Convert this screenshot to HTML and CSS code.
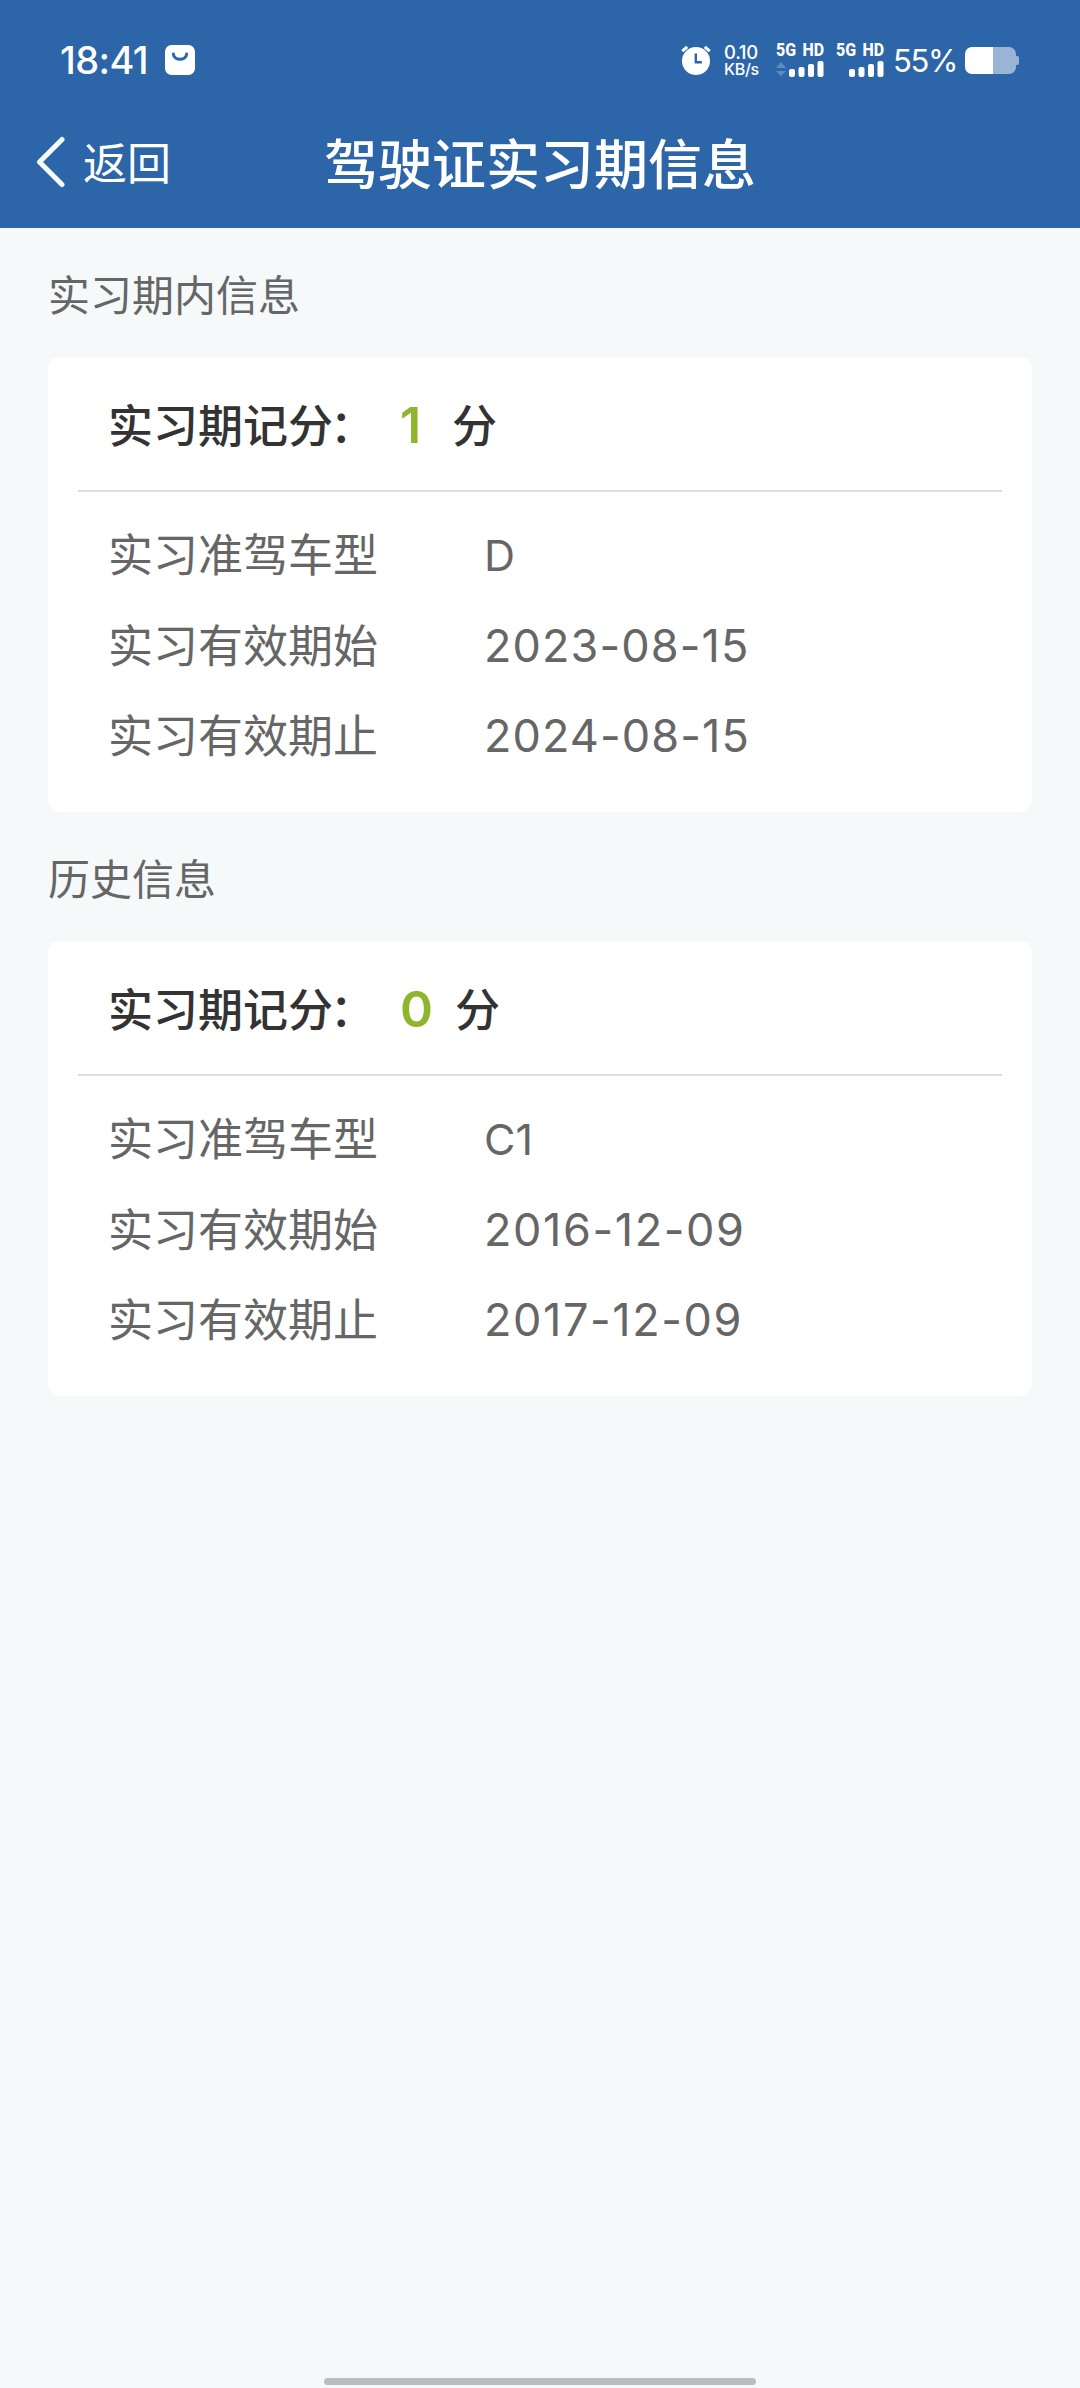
FILE: index.html
```html
<!DOCTYPE html>
<html lang="zh-CN">
<head>
  <meta charset="UTF-8">
  <title>驾驶证实习期信息</title>
  <link rel="stylesheet" href="styles.css">
</head>
<body>
  <header class="header">
    <div class="status-bar">
      <span class="time">18:41</span>
      <svg class="app-icon" width="30" height="30" viewBox="0 0 30 30">
        <rect width="30" height="30" rx="6.5" fill="#fff"/>
        <path d="M8.300 9c.8 7 12.600 7 13.400 0" fill="none" stroke="#2c65a8" stroke-width="3" stroke-linecap="round"/>
      </svg>
      <div class="status-right">
        <svg class="alarm" width="30" height="30" viewBox="0 0 30 30">
          <circle cx="15" cy="16" r="14" fill="#fff"/>
          <path d="M1.2 6.2l5-4.4M28.8 6.2l-5-4.4" stroke="#fff" stroke-width="3"/>
          <path d="M14.8 8.5v8.7h6" fill="none" stroke="#2c65a8" stroke-width="2.4"/>
        </svg>
        <div class="speed"><span class="speed-num">0.10</span><span class="speed-unit">KB/s</span></div>
        <div class="signal signal-1">
          <span>5G HD</span>
          <svg width="48" height="16" viewBox="0 0 48 16">
            <path d="M0 7l5-6 5 6zM0 10h10l-5 5z" fill="#5f8cc0"/>
            <g fill="#fff">
              <rect x="13" y="8" width="6" height="8" rx="2"/>
              <rect x="22.5" y="6" width="6" height="10" rx="2"/>
              <rect x="32" y="3" width="6" height="13" rx="2"/>
              <rect x="41.5" y="0" width="6" height="16" rx="2"/>
            </g>
          </svg>
        </div>
        <div class="signal signal-2">
          <span>5G HD</span>
          <svg width="48" height="16" viewBox="0 0 48 16">
            <g fill="#fff">
              <rect x="13" y="8" width="6" height="8" rx="2"/>
              <rect x="22.5" y="6" width="6" height="10" rx="2"/>
              <rect x="32" y="3" width="6" height="13" rx="2"/>
              <rect x="41.5" y="0" width="6" height="16" rx="2"/>
            </g>
          </svg>
        </div>
        <span class="percent">55%</span>
        <svg class="battery" width="54" height="27" viewBox="0 0 54 27">
          <path d="M28 0h16a7 7 0 0 1 7 7v2h1a2 2 0 0 1 2 2v5a2 2 0 0 1-2 2h-1v2a7 7 0 0 1-7 7H28z" fill="#9ab4d5"/>
          <path d="M28 0H7a7 7 0 0 0-7 7v13a7 7 0 0 0 7 7h21z" fill="#fff"/>
        </svg>
      </div>
    </div>
    <nav class="nav">
      <a class="back">
        <svg width="30" height="52" viewBox="0 0 30 52">
          <path d="M26 3.500L3.500 26 26 48.500" fill="none" stroke="#f5fcff" stroke-width="5" stroke-linecap="round" stroke-linejoin="round"/>
        </svg>
        <span>返回</span>
      </a>
      <h1>驾驶证实习期信息</h1>
    </nav>
  </header>

  <main class="content">
    <h2>实习期内信息</h2>
    <section class="card">
      <div class="score">
        <span class="score-label">实习期记分<span class="colon">：</span></span>
        <span class="score-num">1</span>
        <span>分</span>
      </div>
      <dl class="info">
        <dt>实习准驾车型</dt><dd class="type">D</dd>
        <dt>实习有效期始</dt><dd>2023-08-15</dd>
        <dt>实习有效期止</dt><dd>2024-08-15</dd>
      </dl>
    </section>

    <h2>历史信息</h2>
    <section class="card history">
      <div class="score">
        <span class="score-label">实习期记分<span class="colon">：</span></span>
        <span class="score-num">0</span>
        <span>分</span>
      </div>
      <dl class="info">
        <dt>实习准驾车型</dt><dd class="type">C1</dd>
        <dt>实习有效期始</dt><dd>2016-12-09</dd>
        <dt>实习有效期止</dt><dd>2017-12-09</dd>
      </dl>
    </section>
  </main>

  <footer class="home-bar"></footer>
</body>
</html>
```

FILE: styles.css
```css
* {
  box-sizing: border-box;
}
body {
  display: flex;
  flex-direction: column;
  height: 2388px;
  margin: 0;
  background: #f5f9fa;
  color: #666;
  font-family: "Noto Sans CJK SC", sans-serif;
  font-size: 45px;
}
svg {
  display: block;
  flex: none;
}
h1, h2, dl, dd {
  margin: 0;
  font-weight: normal;
}

/* Header */
.header {
  height: 228px;
  background: #2c65a8;
  color: #fff;
}
.status-bar {
  display: flex;
  align-items: center;
  height: 96px;
  padding: 23px 61px 0 60px;
  font-family: Inter, sans-serif;
}
.time {
  width: 105px;
  font-size: 38px;
  font-weight: 500;
  letter-spacing: -0.6px;
}
.status-right {
  display: flex;
  align-items: center;
  margin-left: auto;
}
.speed {
  display: flex;
  flex-direction: column;
  width: 38px;
  margin-left: 13px;
  font-weight: 500;
}
.speed-num {
  font-size: 18.5px;
  line-height: 18px;
  letter-spacing: -0.3px;
}
.speed-unit {
  font-size: 16px;
  line-height: 16px;
  letter-spacing: -0.3px;
}
.signal {
  width: 48px;
}
.signal span {
  display: block;
  width: 56px;
  height: 18px;
  font-family: Roboto, sans-serif;
  font-size: 19px;
  font-weight: 800;
  line-height: 13px;
  word-spacing: 3px;
  white-space: nowrap;
  transform: scaleX(0.84);
  transform-origin: left;
}
.signal-1 {
  margin-left: 14px;
}
.signal-2 {
  margin-left: 12px;
}
.percent {
  width: 64px;
  margin-left: 9px;
  padding-top: 1px;
  font-size: 31px;
  letter-spacing: -1.3px;
}
.battery {
  margin-left: 8px;
  margin-top: 1px;
}
.nav {
  display: grid;
  grid-template-columns: 1fr auto 1fr;
  align-items: center;
  height: 132px;
  padding: 0 36px;
}
.back {
  display: flex;
  align-items: center;
  gap: 17px;
  font-size: 44px;
  line-height: 60px;
}
.back span {
  padding-bottom: 2px;
}
.nav h1 {
  font-size: 54px;
  font-weight: 500;
  line-height: 60px;
}

/* Cards */
.content {
  flex: 1;
  padding: 0 48px;
}
.content h2 {
  height: 129px;
  font-size: 42px;
  line-height: 129px;
}
.card {
  height: 455px;
  border-radius: 12px;
  background: #fff;
}
.score {
  display: flex;
  height: 135px;
  margin: 0 30px;
  padding-left: 30px;
  border-bottom: 2px solid #ddd;
  color: #333;
  font-weight: 500;
  line-height: 133px;
}
.score-label {
  width: 292px;
}
.colon {
  margin-left: -3px;
}
.score-num {
  min-width: 30px;
  margin-right: 22px;
  color: #8fb52d;
  font-family: Inter, sans-serif;
  font-size: 50px;
  font-weight: 600;
  line-height: 136px;
}
.info {
  display: grid;
  grid-template-columns: 376px 1fr;
  grid-auto-rows: 90.5px;
  padding: 17px 60px 0;
  line-height: 88px;
}
.info dd {
  font-family: Inter, sans-serif;
  line-height: 92px;
  letter-spacing: 1.1px;
}
.history dd {
  letter-spacing: 1.6px;
}
.info .type {
  font-size: 43px;
  letter-spacing: 0;
}

/* Gesture bar */
.home-bar {
  width: 432px;
  height: 7px;
  margin: 0 auto 3px;
  border-radius: 4px;
  background: #b8bdbd;
}
```
